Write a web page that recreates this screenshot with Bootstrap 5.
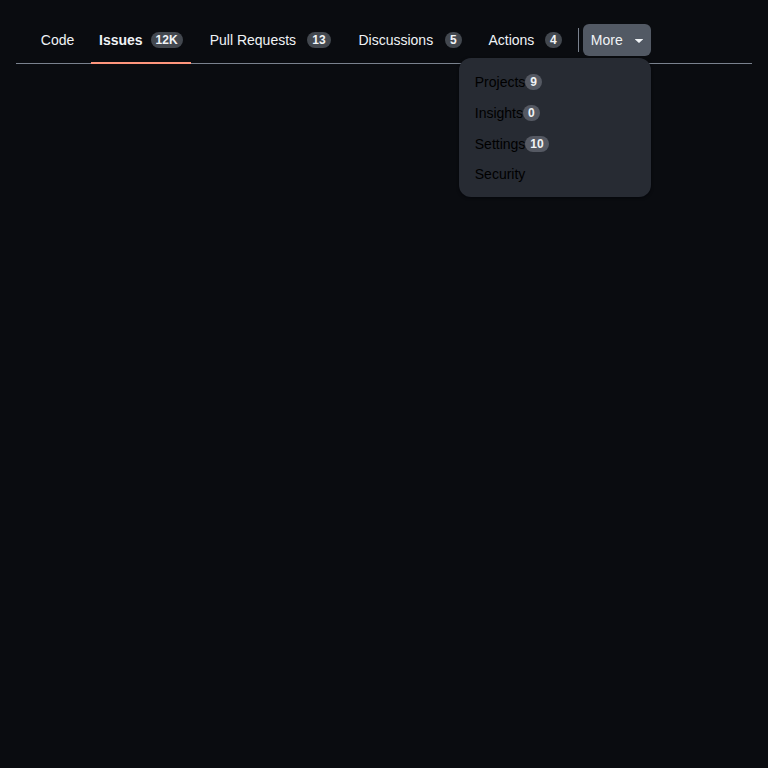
<!DOCTYPE html>
<html lang="en">
<head>
<meta charset="utf-8">
<meta name="viewport" content="width=device-width, initial-scale=1">
<title>Repository navigation</title>
<link href="https://cdn.jsdelivr.net/npm/bootstrap@5.3.0/dist/css/bootstrap.min.css" rel="stylesheet">
<style>
body { background: #0a0c10; color: #f0f3f6; font-family: "Liberation Sans", Arial, sans-serif; font-size: 14px; line-height: 20px; }
.repo-nav { min-height: 48px; box-shadow: inset 0 -1px #7a828e; }
.repo-tab { color: #f0f3f6; border-bottom: 2px solid transparent; padding: 14px 8px 12px; }
.repo-tab.active { font-weight: 700; border-bottom-color: #ff967d; }
.tab-label { display: inline-grid; text-align: center; }
/* Reserves the bold width so tabs keep their size when selected */
.tab-label::after { content: attr(data-text); height: 0; overflow: hidden; visibility: hidden; font-weight: 700; }
.counter { height: 16px; padding: 0 5px; border-radius: 16px; background: #43484f; color: #f0f3f6; font-size: 12px; font-weight: 700; line-height: 16px; text-align: center; }
.tab-divider { width: 1px; height: 24px; background: #7a828e; }
.more-btn { --bs-btn-padding-x: 8px; --bs-btn-padding-y: 5px; --bs-btn-font-size: 14px; --bs-btn-line-height: 20px; --bs-btn-border-radius: 6px; --bs-btn-color: #f0f3f6; --bs-btn-bg: #525964; --bs-btn-active-color: #f0f3f6; --bs-btn-active-bg: #525964; --bs-btn-active-border-color: transparent; --bs-btn-hover-color: #f0f3f6; --bs-btn-hover-bg: #5b626d; --bs-btn-border-width: 0; width: 68px; height: 32px; }
.more-menu.dropdown-menu { --bs-dropdown-bg: #272b33; --bs-dropdown-border-width: 0; --bs-dropdown-border-radius: 12px; --bs-dropdown-padding-y: 8px; --bs-dropdown-font-size: 14px; --bs-dropdown-min-width: 192px; --bs-dropdown-item-padding-x: 16px; --bs-dropdown-item-padding-y: 6px; --bs-dropdown-link-color: #000; --bs-dropdown-link-hover-color: #000; --bs-dropdown-link-hover-bg: #343942; top: 100%; right: 0; left: auto; margin-top: 2px; box-shadow: 0 1px 3px rgba(1, 4, 9, .6); }
.more-menu .dropdown-item { line-height: 18px; }
.more-menu .has-count { min-height: 31px; }
.more-menu .counter { background: #555963; }
</style>
</head>
<body class="min-vh-100">
<div class="p-3">
<nav class="repo-nav px-3" aria-label="Repository">
<ul class="list-unstyled d-flex align-items-center gap-2 mb-0">
<li><a class="repo-tab d-flex align-items-center text-decoration-none" href="#"><span class="tab-label" data-text="Code">Code</span></a></li>
<li><a class="repo-tab active d-flex align-items-center gap-2 text-decoration-none" href="#" aria-current="page"><span class="tab-label" data-text="Issues">Issues</span><span class="counter">12K</span></a></li>
<li><a class="repo-tab d-flex align-items-center gap-2 text-decoration-none text-nowrap" href="#"><span class="tab-label" data-text="Pull Requests">Pull Requests</span><span class="counter">13</span></a></li>
<li><a class="repo-tab d-flex align-items-center gap-2 text-decoration-none" href="#"><span class="tab-label" data-text="Discussions">Discussions</span><span class="counter">5</span></a></li>
<li><a class="repo-tab d-flex align-items-center gap-2 text-decoration-none" href="#"><span class="tab-label" data-text="Actions">Actions</span><span class="counter">4</span></a></li>
<li class="d-flex align-items-center gap-1">
<span class="tab-divider"></span>
<div class="dropdown">
<button class="btn more-btn show d-flex align-items-center justify-content-between" type="button" data-bs-toggle="dropdown" data-bs-display="static" aria-expanded="true"><span>More</span><svg width="8" height="6" viewBox="0 -2 8 6" fill="currentColor" aria-hidden="true"><path d="M.4 0h7.2c.4 0 .5.4.3.6L4.3 3.8a.4.4 0 0 1-.6 0L.1.6C-.1.4 0 0 .4 0z"/></svg></button>
<ul class="dropdown-menu more-menu show">
<li><a class="dropdown-item has-count d-flex align-items-center" href="#">Projects<span class="counter">9</span></a></li>
<li><a class="dropdown-item has-count d-flex align-items-center" href="#">Insights<span class="counter">0</span></a></li>
<li><a class="dropdown-item has-count d-flex align-items-center" href="#">Settings<span class="counter">10</span></a></li>
<li><a class="dropdown-item" href="#">Security</a></li>
</ul>
</div>
</li>
</ul>
</nav>
</div>
<script src="https://cdn.jsdelivr.net/npm/bootstrap@5.3.0/dist/js/bootstrap.bundle.min.js"></script>
</body>
</html>
